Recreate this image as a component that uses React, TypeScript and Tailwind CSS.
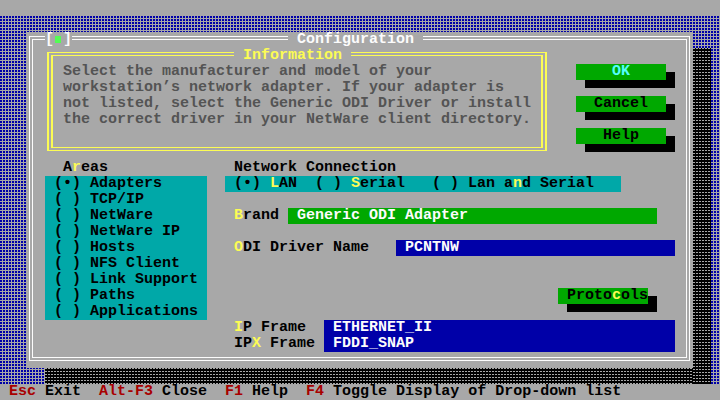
const desk =
  "bg-[#0000a8] bg-[image:linear-gradient(transparent_2px,#a8a8a8_2px),linear-gradient(90deg,transparent_2px,#a8a8a8_2px)] bg-[length:3px_3px]";
const shade =
  "bg-[#a8a8a8] bg-[image:linear-gradient(90deg,transparent_2px,#000_2px),linear-gradient(transparent_1px,#000_1px)] bg-[length:3px_3px]";

function Hk({ children }: { children: string }) {
  return <span className="text-[#fcfc54]">{children}</span>;
}

function Key({ children }: { children: string }) {
  return <span className="text-[#a80000]">{children}</span>;
}

const dot = "\u2022";

const areas = [
  `(${dot}) Adapters`,
  "( ) TCP/IP",
  "( ) NetWare",
  "( ) NetWare IP",
  "( ) Hosts",
  "( ) NFS Client",
  "( ) Link Support",
  "( ) Paths",
  "( ) Applications",
];

export default function App() {
  return (
    <div className="w-[720px] h-[400px] overflow-hidden bg-[#a8a8a8] [font-family:'Liberation_Mono',monospace] font-bold text-[15px] leading-4 text-black">
      <div className="grid grid-cols-[repeat(80,9px)] grid-rows-[repeat(25,16px)] whitespace-pre">
        {/* desktop */}
        <div className={`col-start-1 col-end-81 row-start-2 row-end-25 ${desk}`} />

        {/* dialog shadow */}
        <div className={`col-start-78 col-end-80 row-start-4 row-end-25 ${shade}`} />
        <div className={`col-start-6 col-end-78 row-start-24 row-end-25 ${shade}`} />

        {/* dialog */}
        <div className="col-start-4 col-end-78 row-start-3 row-end-24 bg-[#a8a8a8]" />
        <div className="col-start-4 col-end-78 row-start-3 row-end-24 ml-[2px] mt-[4px] w-[661px] h-[325px] border border-[#fcfcfc] p-[2px]">
          <div className="h-full border border-[#fcfcfc]" />
        </div>
        <div className="col-start-6 col-end-9 row-start-3 flex bg-[#a8a8a8] text-[#fcfcfc]">
          <span className="w-[9px]">[</span>
          <span className="w-[9px]">
            <span className="block ml-[1px] mt-[4px] w-[6px] h-[7px] bg-[#54fc54]" />
          </span>
          <span className="w-[9px]">]</span>
        </div>
        <div className="col-start-33 col-end-48 row-start-3 bg-[#a8a8a8] text-[#fcfcfc]"> Configuration </div>

        {/* information box */}
        <div className="col-start-6 col-end-66 row-start-4 row-end-11 ml-[2px] mt-[4px] w-[500px] h-[99px] border-x-2 border-y border-[#fcfc54] p-[2px]">
          <div className="h-full border-x-2 border-y border-[#fcfc54]" />
        </div>
        <div className="col-start-27 col-end-40 row-start-4 bg-[#a8a8a8] text-[#fcfc54]"> Information </div>
        <div className="col-start-8 col-end-61 row-start-5 row-end-9 text-[#545454]">
          <div>Select the manufacturer and model of your</div>
          <div>workstation{"\u2019"}s network adapter. If your adapter is</div>
          <div>not listed, select the Generic ODI Driver or install</div>
          <div>the correct driver in your NetWare client directory.</div>
        </div>

        {/* buttons */}
        <div className="col-start-65 col-end-75 row-start-5 bg-[#00a800] text-[#54fcfc]">    OK</div>
        <div className="col-start-75 row-start-5 self-end h-[8px] bg-black" />
        <div className="col-start-66 col-end-76 row-start-6 self-start h-[8px] bg-black" />

        <div className="col-start-65 col-end-75 row-start-7 bg-[#00a800]">  Cancel</div>
        <div className="col-start-75 row-start-7 self-end h-[8px] bg-black" />
        <div className="col-start-66 col-end-76 row-start-8 self-start h-[8px] bg-black" />

        <div className="col-start-65 col-end-75 row-start-9 bg-[#00a800]">   Help</div>
        <div className="col-start-75 row-start-9 self-end h-[8px] bg-black" />
        <div className="col-start-66 col-end-76 row-start-10 self-start h-[8px] bg-black" />

        {/* areas */}
        <div className="col-start-8 col-end-14 row-start-11">
          A<Hk>r</Hk>eas
        </div>
        <div className="col-start-6 col-end-24 row-start-12 row-end-21 bg-[#00a8a8] pl-[9px]">
          {areas.map((a) => (
            <div key={a}>{a}</div>
          ))}
        </div>

        {/* network connection */}
        <div className="col-start-27 col-end-46 row-start-11">Network Connection</div>
        <div className="col-start-26 col-end-70 row-start-12 bg-[#00a8a8] pl-[9px]">
          {`(${dot}) `}<Hk>L</Hk>{"AN  ( ) "}<Hk>S</Hk>{"erial   ( ) Lan a"}<Hk>n</Hk>{"d Serial"}
        </div>

        <div className="col-start-27 col-end-33 row-start-14">
          <Hk>B</Hk>rand
        </div>
        <div className="col-start-33 col-end-74 row-start-14 bg-[#00a800] text-[#fcfcfc] pl-[9px]">Generic ODI Adapter</div>

        <div className="col-start-27 col-end-44 row-start-16">
          <Hk>O</Hk>DI Driver Name
        </div>
        <div className="col-start-45 col-end-76 row-start-16 bg-[#0000a8] text-[#fcfcfc] pl-[9px]">PCNTNW</div>

        {/* protocols */}
        <div className="col-start-63 col-end-73 row-start-19 bg-[#00a800] pl-[9px]">
          Proto<Hk>c</Hk>ols
        </div>
        <div className="col-start-73 row-start-19 self-end h-[8px] bg-black" />
        <div className="col-start-64 col-end-74 row-start-20 self-start h-[8px] bg-black" />

        {/* frames */}
        <div className="col-start-27 col-end-37 row-start-21 row-end-23">
          <div>
            <Hk>I</Hk>P Frame
          </div>
          <div>
            IP<Hk>X</Hk> Frame
          </div>
        </div>
        <div className="col-start-37 col-end-76 row-start-21 row-end-23 bg-[#0000a8] text-[#fcfcfc] pl-[9px]">
          <div>ETHERNET_II</div>
          <div>FDDI_SNAP</div>
        </div>

        {/* status line */}
        <div className="col-start-1 col-end-81 row-start-25 bg-[#a8a8a8] pl-[9px]">
          <Key>Esc</Key>{" Exit  "}<Key>Alt-F3</Key>{" Close  "}<Key>F1</Key>{" Help  "}<Key>F4</Key>{" Toggle Display of Drop-down list"}
        </div>
      </div>
    </div>
  );
}
